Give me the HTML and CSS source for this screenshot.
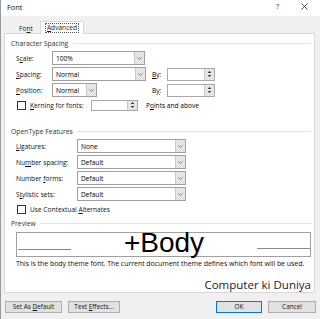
FILE: index.html
```html
<!DOCTYPE html>
<html>
<head>
<meta charset="utf-8">
<link rel="stylesheet" href="styles.css">
</head>
<body>
<div class="window">
  <div class="titlebar">
    <span class="title">Font</span>
    <span class="help">?</span>
    <svg class="close" width="7" height="7" viewBox="0 0 7 7"><path d="M0.5 0.5L6.5 6.5M6.5 0.5L0.5 6.5" stroke="#222" stroke-width="0.8"/></svg>
  </div>
  <div class="tabs">
    <div class="tab">Fo<u>n</u>t</div>
    <div class="tab active"><span class="focus"><u>A</u>dvanced</span></div>
  </div>
  <div class="panel">
    <div class="heading heading1"><span>Character Spacing</span><i></i></div>
    <div class="row g1">
      <span class="lbl w36">S<u>c</u>ale:</span>
      <div class="select w93"><span class="val">100%</span><span class="drop"><svg width="5" height="3" viewBox="0 0 5 3"><path d="M0.3 0.3L2.5 2.5L4.7 0.3" stroke="#555" stroke-width="0.7" fill="none"/></svg></span></div>
    </div>
    <div class="row g1">
      <span class="lbl w36"><u>S</u>pacing:</span>
      <div class="select w94"><span class="val">Normal</span><span class="drop"><svg width="5" height="3" viewBox="0 0 5 3"><path d="M0.3 0.3L2.5 2.5L4.7 0.3" stroke="#555" stroke-width="0.7" fill="none"/></svg></span></div>
      <span class="by"><u>B</u>y:</span>
      <div class="spin"><span class="sval"></span><span class="arrows"><svg width="5" height="8" viewBox="0 0 5 8"><path d="M2.5 1L4.3 3H0.7Z M2.5 7L4.3 5H0.7Z" fill="#333"/></svg></span></div>
    </div>
    <div class="row g1">
      <span class="lbl w36"><u>P</u>osition:</span>
      <div class="select w45"><span class="val">Normal</span><span class="drop"><svg width="5" height="3" viewBox="0 0 5 3"><path d="M0.3 0.3L2.5 2.5L4.7 0.3" stroke="#555" stroke-width="0.7" fill="none"/></svg></span></div>
      <span class="by by2">B<u>y</u>:</span>
      <div class="spin"><span class="sval"></span><span class="arrows"><svg width="5" height="8" viewBox="0 0 5 8"><path d="M2.5 1L4.3 3H0.7Z M2.5 7L4.3 5H0.7Z" fill="#333"/></svg></span></div>
    </div>
    <div class="row g1 kern">
      <span class="check"></span>
      <span class="lbl kl"><u>K</u>erning for fonts:</span>
      <div class="spin"><span class="sval"></span><span class="arrows"><svg width="5" height="8" viewBox="0 0 5 8"><path d="M2.5 1L4.3 3H0.7Z M2.5 7L4.3 5H0.7Z" fill="#333"/></svg></span></div>
      <span class="pts">P<u>o</u>ints and above</span>
    </div>

    <div class="heading heading2"><span>OpenType Features</span><i></i></div>
    <div class="row g2">
      <span class="lbl w61"><u>L</u>igatures:</span>
      <div class="select w109"><span class="val">None</span><span class="drop"><svg width="5" height="3" viewBox="0 0 5 3"><path d="M0.3 0.3L2.5 2.5L4.7 0.3" stroke="#555" stroke-width="0.7" fill="none"/></svg></span></div>
    </div>
    <div class="row g2">
      <span class="lbl w61">Nu<u>m</u>ber spacing:</span>
      <div class="select w109"><span class="val">Default</span><span class="drop"><svg width="5" height="3" viewBox="0 0 5 3"><path d="M0.3 0.3L2.5 2.5L4.7 0.3" stroke="#555" stroke-width="0.7" fill="none"/></svg></span></div>
    </div>
    <div class="row g2">
      <span class="lbl w61">Number <u>f</u>orms:</span>
      <div class="select w109"><span class="val">Default</span><span class="drop"><svg width="5" height="3" viewBox="0 0 5 3"><path d="M0.3 0.3L2.5 2.5L4.7 0.3" stroke="#555" stroke-width="0.7" fill="none"/></svg></span></div>
    </div>
    <div class="row g2">
      <span class="lbl w61">S<u>t</u>ylistic sets:</span>
      <div class="select w109"><span class="val">Default</span><span class="drop"><svg width="5" height="3" viewBox="0 0 5 3"><path d="M0.3 0.3L2.5 2.5L4.7 0.3" stroke="#555" stroke-width="0.7" fill="none"/></svg></span></div>
    </div>
    <div class="row ctx">
      <span class="check"></span>
      <span class="lbl">Use Contextual <u>A</u>lternates</span>
    </div>

    <div class="heading heading3"><span>Preview</span><i></i></div>
    <div class="preview">
      <i class="pline left"></i>
      <span class="big">+Body</span>
      <i class="pline right"></i>
    </div>
    <div class="caption">This is the body theme font. The current document theme defines which font will be used.</div>
    <div class="mark">Computer ki Duniya</div>
  </div>
  <div class="footer">
    <div class="btn b1">Set As <u>D</u>efault</div>
    <div class="btn b2">Text <u>E</u>ffects...</div>
    <div class="spacer"></div>
    <div class="btn ok">OK</div>
    <div class="btn cancel">Cancel</div>
  </div>
</div>
</body>
</html>
```
FILE: styles.css
```css
* { box-sizing: border-box; }
body {
  margin: 0;
  width: 320px;
  height: 319px;
  overflow: hidden;
  background: #f0f0f0;
  font-family: "Open Sans", "Noto Sans", sans-serif;
  font-size: 6.6px;
  color: #000;
}
u { text-decoration-thickness: 0.6px; text-underline-offset: 1px; }
.window {
  height: 319px;
  border-left: 1px solid #9a9a9a;
  display: flex;
  flex-direction: column;
}
.titlebar {
  height: 16px;
  background: #fff;
  display: flex;
  align-items: center;
  padding-left: 6px;
  font-size: 7.4px;
  color: #111;
}
.title { flex: 1; margin-top: -2px; }
.help { margin-right: 22px; margin-top: -3px; font-size: 7px; color: #333; }
.close { margin-right: 12px; margin-top: -3px; }
.tabs {
  height: 17px;
  display: flex;
  align-items: flex-end;
  padding-left: 12px;
}
.tab {
  height: 9px;
  width: 26px;
  display: flex;
  align-items: center;
  justify-content: center;
  color: #222;
}
.tab.active {
  height: 13px;
  width: 44px;
  background: #fff;
  border: 1px solid #d9d9d9;
  border-bottom: none;
  margin-left: 1px;
  margin-bottom: -1px;
  position: relative;
  z-index: 1;
}
.focus { border: 1px dotted #555; padding: 0 1px; line-height: 8px; }
.panel {
  margin-left: 3px;
  width: 311px;
  height: 260px;
  background: #fff;
  border: 1px solid #d9d9d9;
  padding: 0 3px 0 6px;
  display: flex;
  flex-direction: column;
}
.heading {
  height: 10px;
  display: flex;
  align-items: center;
  color: #333;
  font-size: 6.8px;
}
.heading i { flex: 1; height: 1px; background: #e3e3e3; margin-left: 4px; }
.heading1 { margin-top: 5px; margin-bottom: 3px; }
.heading2 { margin-top: 14px; margin-bottom: 3px; }
.heading3 { margin-top: 2px; margin-bottom: 4px; }
.row {
  height: 14px;
  display: flex;
  align-items: center;
  padding-left: 5px;
  margin-bottom: 2px;
}
.lbl { color: #111; white-space: nowrap; }
.w36 { width: 36px; }
.w61 { width: 61px; }
.select {
  height: 14px;
  border: 1px solid #a0a0a0;
  display: flex;
  align-items: center;
  background: #fff;
}
.w93 { width: 93px; }
.w94 { width: 94px; }
.w45 { width: 45px; }
.w109 { width: 109px; }
.val { flex: 1; padding-left: 3px; }
.drop {
  width: 10px;
  height: 100%;
  background: #e5e5e5;
  border-left: 1px solid #c8c8c8;
  display: flex;
  align-items: center;
  justify-content: center;
}
.by { width: 15px; margin-left: 6px; }
.by2 { margin-left: 55px; }
.spin {
  width: 48px;
  height: 13px;
  border: 1px solid #a9a9a9;
  display: flex;
}
.sval { flex: 1; }
.arrows {
  width: 10px;
  background: #e5e5e5;
  border-left: 1px solid #c8c8c8;
  display: flex;
  align-items: center;
  justify-content: center;
}
.check {
  width: 9px;
  height: 9px;
  border: 1px solid #333;
  background: #fff;
  margin-left: 1px;
  margin-right: 4px;
}
.kern .kl { width: 61px; }
.kern .spin { width: 47px; height: 11px; }
.pts { margin-left: 8px; }
.ctx { height: 12px; margin-top: 1px; margin-bottom: 2px; }
.preview {
  margin-left: 5px;
  height: 26px;
  border: 1px solid #a0a0a0;
  display: flex;
  align-items: center;
}
.pline { display: block; height: 1px; background: #8a8a8a; width: 53px; align-self: flex-end; margin-bottom: 6px; }
.pline.left { margin-left: 1px; }
.pline.right { margin-bottom: 7px; }
.big {
  flex: 1;
  text-align: center;
  font-family: "Liberation Sans", Arial, sans-serif;
  font-size: 28px;
  line-height: 26px;
  margin-top: -3px;
  color: #000;
}
.caption {
  margin-left: 5px;
  margin-top: 2px;
  height: 10px;
  line-height: 10px;
  font-size: 7px;
  letter-spacing: -0.05px;
  white-space: nowrap;
  color: #111;
}
.mark {
  margin-top: 9px;
  text-align: right;
  font-size: 11.5px;
  color: #222;
  line-height: 14px;
}
.footer {
  height: 26px;
  display: flex;
  align-items: flex-start;
  padding-top: 8px;
  padding-left: 4px;
}
.btn {
  height: 12px;
  background: #e1e1e1;
  border: 1px solid #adadad;
  text-align: center;
  line-height: 10px;
  color: #111;
  font-size: 6.4px;
  white-space: nowrap;
}
.b1 { width: 57px; }
.b2 { width: 52px; margin-left: 6px; }
.spacer { flex: 1; }
.ok { width: 46px; border-color: #0078d7; }
.cancel { width: 48px; margin-left: 6px; margin-right: 4px; }
```
